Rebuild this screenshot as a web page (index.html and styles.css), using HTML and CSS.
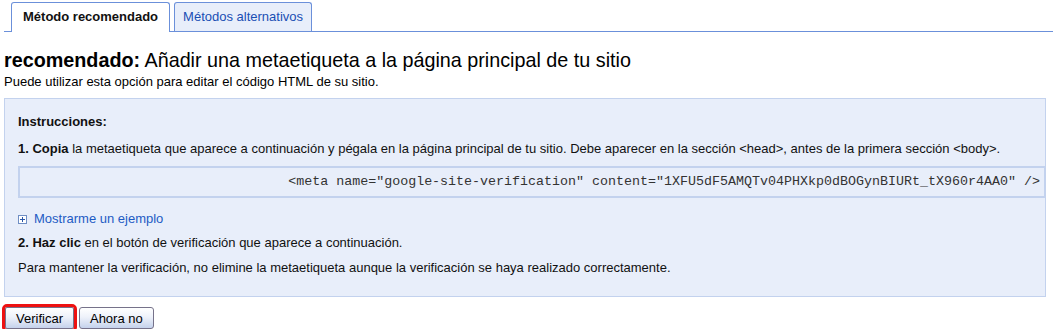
FILE: index.html
```html
<!DOCTYPE html>
<html>
<head>
  <title>Verificación del sitio</title>
  <link rel="stylesheet" href="styles.css">
</head>
<body>
  <div class="tab-bar">
    <div class="tab active">Método recomendado</div>
    <div class="tab">Métodos alternativos</div>
  </div>

  <h1 class="title"><b>recomendado:</b> Añadir una metaetiqueta a la página principal de tu sitio</h1>
  <p class="subtitle">Puede utilizar esta opción para editar el código HTML de su sitio.</p>

  <div class="panel">
    <div class="panel-heading">Instrucciones:</div>
    <p class="step"><b>1. Copia</b> la metaetiqueta que aparece a continuación y pégala en la página principal de tu sitio. Debe aparecer en la sección &lt;head&gt;, antes de la primera sección &lt;body&gt;.</p>
    <div class="code">&lt;meta name="google-site-verification" content="1XFU5dF5AMQTv04PHXkp0dBOGynBIURt_tX960r4AA0" /&gt;</div>
    <a class="expand" href="#">
      <svg width="9" height="9" viewBox="0 0 9 9">
        <rect x="0.5" y="0.5" width="8" height="8" fill="#fff" stroke="#6f8ec4"/>
        <path d="M2 4.5h5M4.5 2v5" stroke="#2a56a8" stroke-width="1"/>
      </svg>
      Mostrarme un ejemplo
    </a>
    <p class="step"><b>2. Haz clic</b> en el botón de verificación que aparece a continuación.</p>
    <p class="step">Para mantener la verificación, no elimine la metaetiqueta aunque la verificación se haya realizado correctamente.</p>
  </div>

  <div class="actions">
    <button class="btn highlight">Verificar</button>
    <button class="btn">Ahora no</button>
  </div>
</body>
</html>
```

FILE: styles.css
```css
body {
  margin: 0;
  padding: 0 0 0 4px;
  font-family: "Liberation Sans", Arial, sans-serif;
  font-size: 13px;
  color: #111;
  background: #fff;
}

.tab-bar {
  display: flex;
  gap: 4px;
  padding: 2px 0 0 7px;
  border-bottom: 1px solid #6b90da;
}

.tab {
  height: 28px;
  line-height: 28px;
  padding: 0 8px;
  border: 1px solid #6b90da;
  border-bottom: none;
  border-radius: 3px 3px 0 0;
  background: #e8eefa;
  color: #1a4fb4;
  font-size: 13px;
}

.tab.active {
  background: #fff;
  color: #111;
  font-weight: bold;
  height: 29px;
  margin-bottom: -1px;
  padding: 0 11px;
}

.title {
  margin: 16px 0 0;
  font-size: 19.75px;
  line-height: 24px;
  font-weight: normal;
  color: #000;
}

.subtitle {
  margin: 2px 0 0;
  font-size: 13px;
  line-height: 16px;
  color: #000;
}

.panel {
  margin-top: 8px;
  padding: 15px 0 20px 13px;
  background: #e8eefa;
  border: 1px solid #c3d2ee;
  margin-right: 7px;
}

.panel-heading {
  font-weight: bold;
  line-height: 16px;
}

.step {
  margin: 11px 0 0;
  line-height: 16px;
}

.step b {
  font-weight: bold;
}

.code {
  margin: 9px -1px 0 0;
  height: 28px;
  line-height: 28px;
  border: 2px solid #c3d2ee;
  font-family: "Liberation Mono", "Courier New", monospace;
  font-size: 13.33px;
  color: #333;
  text-align: right;
  padding-right: 4px;
  white-space: nowrap;
}

.expand {
  display: flex;
  align-items: center;
  gap: 7px;
  margin-top: 13px;
  line-height: 16px;
  color: #1d5bc4;
  text-decoration: none;
}

.expand + .step {
  margin-top: 8px;
}

.step:last-child {
  margin-top: 9px;
}

.actions {
  display: flex;
  align-items: center;
  gap: 5px;
  padding: 10px 0 0 1px;
}

.btn {
  height: 22px;
  padding: 0 10px;
  border: 1px solid #76728a;
  border-radius: 3px;
  background: linear-gradient(#ffffff, #eef2fa 45%, #c5d2ec);
  font-family: "Liberation Sans", Arial, sans-serif;
  font-size: 13px;
  color: #000;
}

.btn.highlight {
  outline: 3px solid #ee1111;
  outline-offset: 0;
  border-radius: 2px;
}
```
